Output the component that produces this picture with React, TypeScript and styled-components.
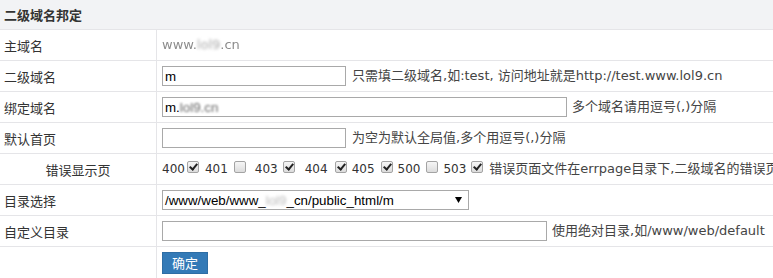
import React from "react";
import styled, { createGlobalStyle } from "styled-components";

const GlobalStyle = createGlobalStyle`
  html, body { margin: 0; padding: 0; background: #fff; overflow: hidden; }
  body { font-family: "DejaVu Sans", "Noto Sans CJK SC", sans-serif; color: #333; }
`;

const Panel = styled.div`
  width: 1000px;
`;

const Header = styled.div`
  box-sizing: border-box;
  height: 30px;
  border-bottom: 1px solid #e5e5e8;
  background: #f2f3f5;
  display: flex;
  align-items: center;
  padding-left: 4px;
  font: bold 13px "Noto Sans CJK SC", sans-serif;
  color: #333;
`;

const Row = styled.div<{ $last?: boolean }>`
  box-sizing: border-box;
  display: grid;
  grid-template-columns: 157px 1fr;
  height: 31px;
  border-bottom: ${(p) => (p.$last ? "none" : "1px solid #e5e5e8")};
`;

const Label = styled.div<{ $center?: boolean }>`
  box-sizing: border-box;
  border-right: 1px solid #e5e5e8;
  display: flex;
  align-items: center;
  justify-content: ${(p) => (p.$center ? "center" : "flex-start")};
  padding-left: ${(p) => (p.$center ? 0 : 4)}px;
  padding-top: 1px;
  font: 13px "Noto Sans CJK SC", sans-serif;
  color: #333;
`;

const Value = styled.div`
  display: flex;
  align-items: center;
  padding-left: 5px;
  white-space: nowrap;
`;

const TextInput = styled.input<{ $w: number }>`
  box-sizing: border-box;
  width: ${(p) => p.$w}px;
  height: 20px;
  margin: 0;
  padding: 0 2px;
  border: 1px solid #a9a9a9;
  border-radius: 0;
  outline: none;
  font: 13.33px "Liberation Sans", Arial, sans-serif;
  color: #000;
  background: #fff;
`;

const FakeInput = styled.div<{ $w: number }>`
  box-sizing: border-box;
  width: ${(p) => p.$w}px;
  height: 20px;
  padding: 0 2px;
  border: 1px solid #a9a9a9;
  display: flex;
  align-items: center;
  font: 13.33px "Liberation Sans", Arial, sans-serif;
  color: #000;
  background: #fff;
`;

const Hint = styled.span<{ $ml?: number }>`
  margin-left: ${(p) => p.$ml ?? 6}px;
  font: 13px "DejaVu Sans", "Noto Sans CJK SC", sans-serif;
  line-height: 20px;
  color: #444;
`;

const Blur = styled.span<{ $b: number; $c: string }>`
  filter: blur(${(p) => p.$b}px);
  color: ${(p) => p.$c};
`;

const Plain = styled.span`
  font: 13px "DejaVu Sans", sans-serif;
  line-height: 20px;
`;

const Code = styled.span<{ $ml: number }>`
  margin-left: ${(p) => p.$ml}px;
  font: 12px "DejaVu Sans", sans-serif;
  line-height: 20px;
  color: #333;
`;

const Check = styled.input.attrs({ type: "checkbox" })<{ $ml: number }>`
  appearance: none;
  -webkit-appearance: none;
  position: relative;
  box-sizing: border-box;
  width: 12px;
  height: 12px;
  margin: 0 0 5px ${(p) => p.$ml}px;
  border: 1px solid #a3a3a3;
  border-radius: 2px;
  background: linear-gradient(#f6f6f6, #dcdcdc);
  &:checked::after {
    content: "";
    position: absolute;
    left: 3px;
    top: 0px;
    width: 3px;
    height: 6px;
    border: solid #222;
    border-width: 0 2px 2px 0;
    transform: rotate(40deg);
  }
`;

const SelectBox = styled.div`
  box-sizing: border-box;
  width: 307px;
  height: 20px;
  border: 1px solid #a9a9a9;
  display: flex;
  align-items: center;
  justify-content: space-between;
  padding: 0 6px 0 2px;
  font: 13.33px "Liberation Sans", Arial, sans-serif;
  color: #000;
  background: #fff;
`;

const Button = styled.button`
  box-sizing: border-box;
  width: 46px;
  height: 22px;
  margin: 0;
  padding: 0;
  background: #337ab7;
  border: 1px solid #2e6da4;
  border-radius: 0;
  color: #fff;
  font: 13px "Noto Sans CJK SC", sans-serif;
  cursor: pointer;
`;

const codes: { code: string; textMl: number; boxMl: number; checked: boolean }[] = [
  { code: "400", textMl: 0, boxMl: 2, checked: true },
  { code: "401", textMl: 6, boxMl: 6, checked: false },
  { code: "403", textMl: 9, boxMl: 5, checked: true },
  { code: "404", textMl: 10, boxMl: 7, checked: true },
  { code: "405", textMl: 5, boxMl: 6, checked: true },
  { code: "500", textMl: 5, boxMl: 6, checked: false },
  { code: "503", textMl: 5, boxMl: 5, checked: true },
];

export default function App() {
  return (
    <>
      <GlobalStyle />
      <Panel>
        <Header>二级域名邦定</Header>
        <Row>
          <Label>主域名</Label>
          <Value>
            <Plain>
              <Blur $b={0.7} $c="#8c8c8c">www.</Blur>
              <Blur $b={1.4} $c="#aaa">lol9</Blur>
              <Blur $b={0.7} $c="#8c8c8c">.cn</Blur>
            </Plain>
          </Value>
        </Row>
        <Row>
          <Label>二级域名</Label>
          <Value>
            <TextInput $w={184} defaultValue="m" />
            <Hint>只需填二级域名,如:test, 访问地址就是http://test.www.lol9.cn</Hint>
          </Value>
        </Row>
        <Row>
          <Label>绑定域名</Label>
          <Value>
            <FakeInput $w={405}>
              <span>m.</span>
              <Blur $b={1.3} $c="#666">lol9.cn</Blur>
            </FakeInput>
            <Hint $ml={5}>多个域名请用逗号(,)分隔</Hint>
          </Value>
        </Row>
        <Row>
          <Label>默认首页</Label>
          <Value>
            <TextInput $w={184} defaultValue="" />
            <Hint>为空为默认全局值,多个用逗号(,)分隔</Hint>
          </Value>
        </Row>
        <Row>
          <Label $center>错误显示页</Label>
          <Value>
            {codes.map((c) => (
              <React.Fragment key={c.code}>
                <Code $ml={c.textMl}>{c.code}</Code>
                <Check $ml={c.boxMl} defaultChecked={c.checked} />
              </React.Fragment>
            ))}
            <Hint>错误页面文件在errpage目录下,二级域名的错误页</Hint>
          </Value>
        </Row>
        <Row>
          <Label>目录选择</Label>
          <Value>
            <SelectBox role="combobox">
              <span>
                /www/web/www_
                <Blur $b={1.5} $c="#bbb">lol9</Blur>
                _cn/public_html/m
              </span>
              <svg width="7" height="6" viewBox="0 0 7 6">
                <path d="M0 0 H7 L3.5 6 Z" fill="#000" />
              </svg>
            </SelectBox>
          </Value>
        </Row>
        <Row>
          <Label>自定义目录</Label>
          <Value>
            <TextInput $w={385} defaultValue="" />
            <Hint $ml={5}>使用绝对目录,如/www/web/default</Hint>
          </Value>
        </Row>
        <Row $last>
          <Label />
          <Value>
            <Button>确定</Button>
          </Value>
        </Row>
      </Panel>
    </>
  );
}
